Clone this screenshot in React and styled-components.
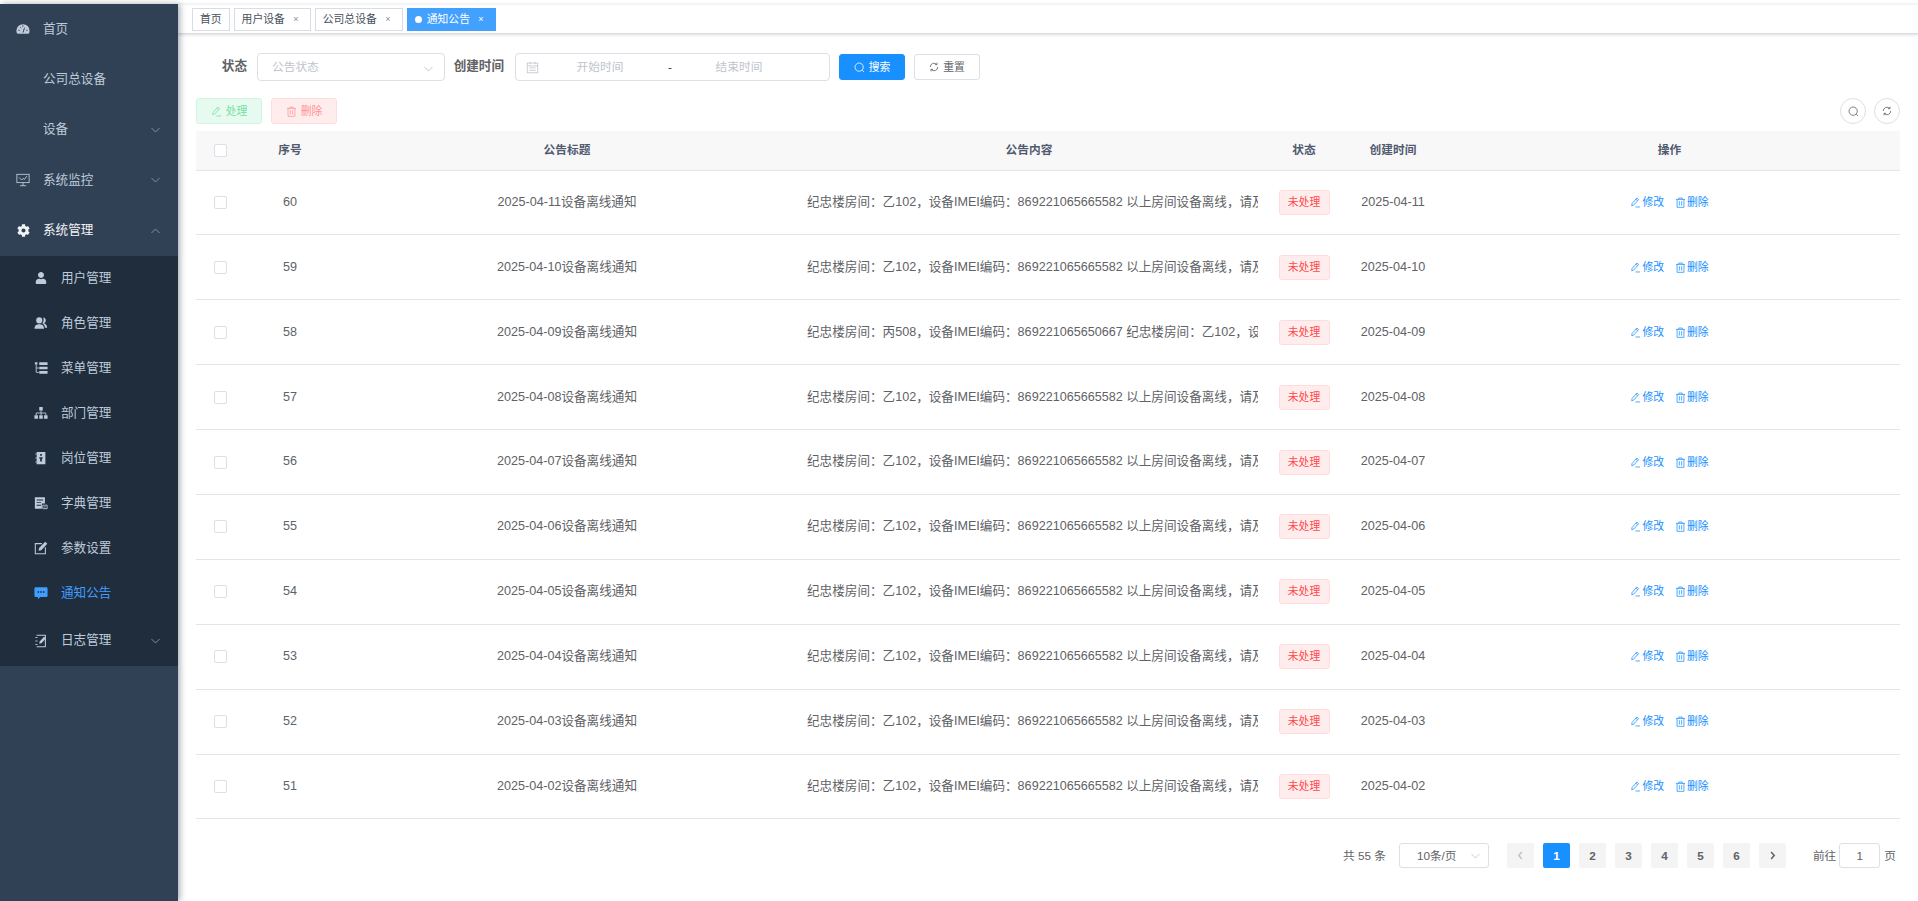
import React from "react";
import styled, { createGlobalStyle } from "styled-components";
import { FaCog, FaUser } from "react-icons/fa";

const GlobalStyle = createGlobalStyle`
  html, body {
    margin: 0;
    padding: 0;
    background: #fff;
    overflow: hidden;
  }
  * {
    box-sizing: border-box;
  }
  body {
    font-family: "Liberation Sans", "Noto Sans CJK SC", sans-serif;
    line-height: 1.2;
  }
`;

const Page = styled.div`
  width: 1918px;
  height: 901px;
  padding-top: 4px;
  display: flex;
  overflow: hidden;
`;

/* sidebar */
const Sidebar = styled.aside`
  width: 178px;
  flex: none;
  background: #304156;
  box-shadow: 2px 0 6px rgba(0, 21, 41, 0.35);
  z-index: 2;
`;

const MenuRow = styled.div`
  height: 50.4px;
  display: flex;
  align-items: center;
  padding-left: 16px;
  font-size: 12.6px;
  color: ${(p) => (p.$active ? "#f4f4f5" : "#bfcbd9")};
  position: relative;
`;

const MenuIcon = styled.span`
  width: 14px;
  height: 14px;
  margin-right: 13px;
  display: flex;
  align-items: center;
  justify-content: center;
  color: ${(p) => p.$color || "#bfcbd9"};
  svg {
    display: block;
  }
`;

const MenuText = styled.span`
  flex: 1;
  padding-left: ${(p) => (p.$plain ? "27px" : "0")};
`;

const Chevron = styled.svg`
  width: 9px;
  height: 6px;
  flex: none;
  margin: ${(p) => p.$margin || "0 18px 0 0"};
  fill: none;
  stroke: ${(p) => p.$color || "#8b98a9"};
  stroke-width: 0.9;
  transform: ${(p) => (p.$up ? "rotate(180deg)" : "none")};
`;

const SubMenu = styled.div`
  background: #1f2d3d;
`;

const SubRow = styled.div`
  height: ${(p) => (p.$tall ? "50px" : "45px")};
  display: flex;
  align-items: center;
  padding-left: 34px;
  font-size: 12.6px;
  color: ${(p) => (p.$active ? "#409eff" : "#bfcbd9")};
`;

/* main */
const Main = styled.main`
  flex: 1;
  min-width: 0;
  display: flex;
  flex-direction: column;
`;

const TagBar = styled.div`
  height: 30px;
  flex: none;
  padding: 3px 0 0 14px;
  display: flex;
  gap: 4px;
  border-top: 1px solid #f1f2f4;
  border-bottom: 1px solid #d8dce5;
  box-shadow: 0 1px 3px rgba(0, 0, 0, 0.12), 0 0 3px rgba(0, 0, 0, 0.04);
  background: #fff;
`;

const Tag = styled.div`
  height: 23px;
  display: flex;
  align-items: center;
  padding: 0 ${(p) => (p.$closable ? "9px" : "7px")} 0 7px;
  font-size: 10.8px;
  border: 1px solid ${(p) => (p.$active ? "#42a0ff" : "#d8dce5")};
  background: ${(p) => (p.$active ? "#42a0ff" : "#fff")};
  color: ${(p) => (p.$active ? "#fff" : "#495060")};
`;

const TagDot = styled.span`
  width: 7px;
  height: 7px;
  border-radius: 50%;
  background: #fff;
  margin-right: 5px;
`;

const TagClose = styled.span`
  font-size: 9px;
  margin-left: 6px;
  width: 10px;
  text-align: center;
  color: ${(p) => (p.$active ? "#fff" : "#8a8f99")};
`;

const Content = styled.div`
  padding: 19px 18px 0;
`;

const SearchForm = styled.form`
  height: 28px;
  display: flex;
  align-items: center;
  margin: 0;
`;

const FormLabel = styled.label`
  width: ${(p) => p.$width}px;
  flex: none;
  text-align: right;
  padding-right: ${(p) => p.$pad}px;
  font-size: 12.6px;
  font-weight: 700;
  color: #606266;
`;

const SelectBox = styled.div`
  width: 188px;
  height: 28px;
  flex: none;
  border: 1px solid #dcdfe6;
  border-radius: 4px;
  display: flex;
  align-items: center;
  justify-content: space-between;
  padding: 0 11px 0 14px;
  font-size: 11.7px;
  color: #c0c4cc;
`;

const RangeBox = styled.div`
  width: 315px;
  height: 28px;
  flex: none;
  border: 1px solid #dcdfe6;
  border-radius: 4px;
  display: grid;
  grid-template-columns: 31px 86px 54px 84px;
  align-items: center;
  padding-left: 10px;
  font-size: 11.7px;
  color: #c0c4cc;
  text-align: center;
  svg {
    display: block;
  }
`;

const RangeDash = styled.span`
  color: #303133;
`;

const Button = styled.button`
  width: 66px;
  height: 26px;
  flex: none;
  margin-left: ${(p) => p.$ml || 0}px;
  border-radius: 3px;
  border: 1px solid ${(p) => p.$border};
  background: ${(p) => p.$bg};
  color: ${(p) => p.$color};
  font: inherit;
  font-size: 10.8px;
  display: flex;
  align-items: center;
  justify-content: center;
  gap: 4px;
  padding: 0;
`;

const Toolbar = styled.div`
  height: 26px;
  margin-top: 17px;
  display: flex;
  align-items: center;
`;

const RoundButtons = styled.div`
  margin-left: auto;
  display: flex;
  gap: 8px;
`;

const RoundButton = styled.div`
  width: 26px;
  height: 26px;
  border: 1px solid #dcdfe6;
  border-radius: 50%;
  display: flex;
  align-items: center;
  justify-content: center;
  color: #606266;
`;

const Table = styled.table`
  width: 1704px;
  margin-top: 7px;
  border-collapse: collapse;
  table-layout: fixed;
`;

const HeadCell = styled.th`
  height: 39px;
  padding: 0 10px;
  background: #f8f8f9;
  border-bottom: 1px solid #dfe6ec;
  font-size: 11.7px;
  font-weight: 700;
  color: #515a6e;
  text-align: center;
`;

const Cell = styled.td`
  height: 64.9px;
  padding: 0 10px;
  border-bottom: 1px solid #dfe6ec;
  font-size: 12.6px;
  color: #606266;
  text-align: center;
`;

const ClipText = styled.div`
  white-space: nowrap;
  overflow: hidden;
  text-align: left;
  margin-right: -7px;
`;

const Check = styled.span`
  display: block;
  width: 13px;
  height: 13px;
  margin-left: 8px;
  border: 1px solid #dcdfe6;
  border-radius: 2px;
  background: #fff;
`;

const StatusTag = styled.span`
  display: inline-flex;
  align-items: center;
  justify-content: center;
  vertical-align: middle;
  width: 51px;
  height: 25px;
  font-size: 10.8px;
  color: #ff4949;
  background: #ffeded;
  border: 1px solid #ffdbdb;
  border-radius: 3px;
`;

const Actions = styled.div`
  display: flex;
  justify-content: center;
  gap: 11px;
`;

const ActionLink = styled.span`
  display: flex;
  align-items: center;
  gap: 1px;
  font-size: 10.8px;
  color: #1890ff;
  svg {
    display: block;
  }
`;

const Pagination = styled.div`
  margin-top: 24px;
  padding-right: 4px;
  height: 25px;
  display: flex;
  align-items: center;
  justify-content: flex-end;
  font-size: 11.7px;
  color: #606266;
`;

const PageSize = styled.div`
  width: 90px;
  height: 25px;
  margin: 0 18px 0 13px;
  border: 1px solid #dcdfe6;
  border-radius: 3px;
  display: flex;
  align-items: center;
  justify-content: space-between;
  padding: 0 8px 0 17px;
`;

const PageBtn = styled.div`
  width: 27px;
  height: 25px;
  margin-right: ${(p) => (p.$last ? "27px" : "9px")};
  border-radius: 2px;
  display: flex;
  align-items: center;
  justify-content: center;
  font-weight: 700;
  background: ${(p) => (p.$active ? "#1890ff" : "#f4f4f5")};
  color: ${(p) => (p.$active ? "#fff" : p.$muted ? "#c0c4cc" : "#606266")};
`;

const JumpInput = styled.div`
  width: 41px;
  height: 25px;
  margin: 0 4px 0 3px;
  border: 1px solid #dcdfe6;
  border-radius: 3px;
  display: flex;
  align-items: center;
  justify-content: center;
`;

/* icons */
const Ico = ({ size = 14, children, ...rest }) => (
  <svg width={size} height={size} viewBox="0 0 16 16" fill="currentColor" {...rest}>
    {children}
  </svg>
);

const GaugeIcon = () => (
  <Ico>
    <path d="M0.5 10a7.5 7.5 0 0 1 15 0c0 2-.6 3.500-1.600 3.500H2.100C1.100 13.500.5 12 .5 10z" />
    <path d="M8 12 9.800 6.500M2.800 9.500h1.500M11.800 9.500h1.500M4.800 6l1 1M7.800 3.800v1.700" stroke="#304156" strokeWidth="1.100" fill="none" />
  </Ico>
);

const MonitorIcon = () => (
  <Ico>
    <g fill="none" stroke="currentColor" strokeWidth="1">
      <rect x="1" y="1.500" width="14" height="9.500" />
      <path d="M8 11v3.500M4.500 14.500h7M3.500 5l3 3 2-2 1 1.500 3-4" />
    </g>
  </Ico>
);

const PeoplesIcon = () => (
  <Ico>
    <circle cx="6" cy="5" r="3.500" />
    <path d="M0.500 14.500c0-3.500 2-5 5.500-5s5.500 1.500 5.500 5z" />
    <path d="M10.500 1.800c1.900.2 3 1.500 3 3.200s-1 2.900-2.600 3.200c2.500.5 4.100 2.300 4.100 5.300h-2.500c0-2-1-4-3-5 1.500-1.500 2-4.500 1-6.700z" />
  </Ico>
);

const TreeTableIcon = () => (
  <Ico>
    <path d="M1 1.500h3v2.500H1zM6 1.500h9.500v3H6zM6 6.500h9.500v3H6zM6 11.500h9.500v3H6z" />
    <path d="M2.500 4v9h3M2.500 8h3" fill="none" stroke="currentColor" strokeWidth="1" />
  </Ico>
);

const TreeIcon = () => (
  <Ico>
    <path d="M6 1h4v4H6zM0.500 10.500h4v4h-4zM6 10.500h4v4H6zM11.500 10.500h4v4h-4z" />
    <path d="M8 5v5.500M2.500 10.500V8h11v2.500" fill="none" stroke="currentColor" strokeWidth="1" />
  </Ico>
);

const PostIcon = () => (
  <Ico>
    <path fillRule="evenodd" d="M3 1h10v14H3zM7 3.500v2h2v-2zM6 7v1.500h1v3l1 1 1-1v-3h1V7z" />
    <path d="M1.500 3.500H3M1.500 8H3M1.500 12.500H3" stroke="currentColor" fill="none" />
  </Ico>
);

const DictIcon = () => (
  <Ico>
    <path fillRule="evenodd" d="M1 1.500h11.500v7H9v6H1zM3 4v1h7.500V4zM3 7v1h5V7zM3 10v1h5v-1z" />
    <path d="M10 10.500h5v4h-5z" fill="none" stroke="currentColor" />
    <circle cx="12.500" cy="12.500" r="0.800" />
  </Ico>
);

const EditBoxIcon = () => (
  <Ico>
    <path d="M9 3H1.500v11.500H13V7" fill="none" stroke="currentColor" strokeWidth="1.200" />
    <path d="M12.800.800l2.400 2.400-7 7.300-3 .7.600-3.100z" />
  </Ico>
);

const MessageIcon = () => (
  <Ico>
    <path fillRule="evenodd" d="M2 1.500h12a1.500 1.500 0 0 1 1.500 1.500v8a1.500 1.500 0 0 1-1.500 1.500H7L4.500 15v-2.500H2A1.500 1.500 0 0 1 .5 11V3A1.500 1.500 0 0 1 2 1.500zM4 6v1.800h1.800V6zM7.100 6v1.800h1.800V6zM10.200 6v1.800H12V6z" />
  </Ico>
);

const LogIcon = () => (
  <Ico>
    <path d="M3 1.500h10v13H3" fill="none" stroke="currentColor" strokeWidth="1.200" />
    <path d="M1.500 4H4M1.500 8H4M1.500 12H4" stroke="currentColor" fill="none" />
    <path d="M11.500 3l2 2-5 5.500-2.500.6.500-2.600z" />
  </Ico>
);

const ChevronDown = (props) => (
  <Chevron viewBox="0 0 9 6" {...props}>
    <path d="M0.500 1 4.500 5 8.500 1" />
  </Chevron>
);

const PageArrow = ({ flip }) => (
  <Ico size={11} transform={flip ? "scale(-1 1)" : undefined}>
    <path d="M10 3 5.500 8 10 13" fill="none" stroke="currentColor" strokeWidth="2.200" />
  </Ico>
);

const PencilIcon = ({ size = 11 }) => (
  <Ico size={size}>
    <g fill="none" stroke="currentColor" strokeWidth="1.100">
      <path d="M10 1.500l2.500 2.200-7 8-3 1 .5-3.200zM8.500 3l2.500 2.300M8 14.500h6.500" />
    </g>
  </Ico>
);

const TrashIcon = ({ size = 11 }) => (
  <Ico size={size}>
    <g fill="none" stroke="currentColor" strokeWidth="1.100">
      <path d="M1.500 3.500h13M5.500 3.500V1.500h5v2M3 3.500v11.500h10V3.500M6.300 6v6.500M9.700 6v6.500" />
    </g>
  </Ico>
);

const SearchIcon = ({ size = 11 }) => (
  <Ico size={size}>
    <g fill="none" stroke="currentColor" strokeWidth="1.200">
      <circle cx="7.500" cy="7.500" r="6" />
      <path d="M12 12l2.500 2.500" />
    </g>
  </Ico>
);

const RefreshIcon = ({ size = 10 }) => (
  <Ico size={size}>
    <g fill="none" stroke="currentColor" strokeWidth="1.300">
      <path d="M2 8a6 6 0 0 1 10.500-4M14 8a6 6 0 0 1-10.500 4" />
      <path d="M12.800 1v3.300H9.500M3.200 15v-3.300h3.300" />
    </g>
  </Ico>
);

const DateIcon = () => (
  <Ico size={13}>
    <g fill="none" stroke="#c0c4cc" strokeWidth="1">
      <rect x="1.500" y="2.500" width="13" height="12" />
      <path d="M1.500 6h13M5 1v3M11 1v3M4 8.500h8M4 11.500h8" />
    </g>
  </Ico>
);

const menuTop = [
  { text: "首页", icon: <GaugeIcon /> },
  { text: "公司总设备", plain: true },
  { text: "设备", plain: true, arrow: true },
  { text: "系统监控", icon: <MonitorIcon />, arrow: true },
];

const subMenu = [
  { text: "用户管理", icon: <FaUser size={12} /> },
  { text: "角色管理", icon: <PeoplesIcon /> },
  { text: "菜单管理", icon: <TreeTableIcon /> },
  { text: "部门管理", icon: <TreeIcon /> },
  { text: "岗位管理", icon: <PostIcon /> },
  { text: "字典管理", icon: <DictIcon /> },
  { text: "参数设置", icon: <EditBoxIcon /> },
  { text: "通知公告", icon: <MessageIcon />, active: true },
];

const offline = "869221065665582 以上房间设备离线，请及时处理";
const rows = [
  [60, "2025-04-11", `纪忠楼房间：乙102，设备IMEI编码：${offline}`],
  [59, "2025-04-10", `纪忠楼房间：乙102，设备IMEI编码：${offline}`],
  [58, "2025-04-09", "纪忠楼房间：丙508，设备IMEI编码：869221065650667 纪忠楼房间：乙102，设备IMEI编码：869221065665582"],
  [57, "2025-04-08", `纪忠楼房间：乙102，设备IMEI编码：${offline}`],
  [56, "2025-04-07", `纪忠楼房间：乙102，设备IMEI编码：${offline}`],
  [55, "2025-04-06", `纪忠楼房间：乙102，设备IMEI编码：${offline}`],
  [54, "2025-04-05", `纪忠楼房间：乙102，设备IMEI编码：${offline}`],
  [53, "2025-04-04", `纪忠楼房间：乙102，设备IMEI编码：${offline}`],
  [52, "2025-04-03", `纪忠楼房间：乙102，设备IMEI编码：${offline}`],
  [51, "2025-04-02", `纪忠楼房间：乙102，设备IMEI编码：${offline}`],
];

const columns = [47, 94, 460, 464, 86, 92, 461];

const App = () => {
  return (
    <Page>
      <GlobalStyle />
      <Sidebar>
        {menuTop.map((m) => (
          <MenuRow key={m.text}>
            {m.icon && <MenuIcon>{m.icon}</MenuIcon>}
            <MenuText $plain={m.plain}>{m.text}</MenuText>
            {m.arrow && <ChevronDown />}
          </MenuRow>
        ))}
        <MenuRow $active>
          <MenuIcon $color="#f4f4f5">
            <FaCog size={13} />
          </MenuIcon>
          <MenuText>系统管理</MenuText>
          <ChevronDown $up />
        </MenuRow>
        <SubMenu>
          {subMenu.map((m) => (
            <SubRow key={m.text} $active={m.active}>
              <MenuIcon $color={m.active ? "#409eff" : "#bfcbd9"}>{m.icon}</MenuIcon>
              <MenuText>{m.text}</MenuText>
            </SubRow>
          ))}
          <SubRow $tall>
            <MenuIcon>
              <LogIcon />
            </MenuIcon>
            <MenuText>日志管理</MenuText>
            <ChevronDown />
          </SubRow>
        </SubMenu>
      </Sidebar>

      <Main>
        <TagBar>
          <Tag>首页</Tag>
          <Tag $closable>
            用户设备<TagClose>×</TagClose>
          </Tag>
          <Tag $closable>
            公司总设备<TagClose>×</TagClose>
          </Tag>
          <Tag $closable $active>
            <TagDot />
            通知公告<TagClose $active>×</TagClose>
          </Tag>
        </TagBar>

        <Content>
          <SearchForm>
            <FormLabel $width={61} $pad={10}>
              状态
            </FormLabel>
            <SelectBox>
              公告状态
              <ChevronDown $color="#c0c4cc" $margin="4px 0 0 0" />
            </SelectBox>
            <FormLabel $width={70} $pad={11}>
              创建时间
            </FormLabel>
            <RangeBox>
              <DateIcon />
              <span>开始时间</span>
              <RangeDash>-</RangeDash>
              <span>结束时间</span>
            </RangeBox>
            <Button $ml={9} $bg="#1890ff" $border="#1890ff" $color="#fff">
              <SearchIcon />
              搜索
            </Button>
            <Button $ml={9} $bg="#fff" $border="#dcdfe6" $color="#606266">
              <RefreshIcon />
              重置
            </Button>
          </SearchForm>

          <Toolbar>
            <Button $bg="#e7faf0" $border="#d0f5e0" $color="#71e2a3">
              <PencilIcon />
              处理
            </Button>
            <Button $ml={9} $bg="#ffeded" $border="#ffdbdb" $color="#ff9292">
              <TrashIcon />
              删除
            </Button>
            <RoundButtons>
              <RoundButton>
                <SearchIcon />
              </RoundButton>
              <RoundButton>
                <RefreshIcon />
              </RoundButton>
            </RoundButtons>
          </Toolbar>

          <Table>
            <colgroup>
              {columns.map((w, i) => (
                <col key={i} width={w} />
              ))}
            </colgroup>
            <thead>
              <tr>
                <HeadCell>
                  <Check />
                </HeadCell>
                <HeadCell>序号</HeadCell>
                <HeadCell>公告标题</HeadCell>
                <HeadCell>公告内容</HeadCell>
                <HeadCell>状态</HeadCell>
                <HeadCell>创建时间</HeadCell>
                <HeadCell>操作</HeadCell>
              </tr>
            </thead>
            <tbody>
              {rows.map(([id, date, text]) => (
                <tr key={id}>
                  <Cell>
                    <Check />
                  </Cell>
                  <Cell>{id}</Cell>
                  <Cell>{date}设备离线通知</Cell>
                  <Cell>
                    <ClipText>{text}</ClipText>
                  </Cell>
                  <Cell>
                    <StatusTag>未处理</StatusTag>
                  </Cell>
                  <Cell>{date}</Cell>
                  <Cell>
                    <Actions>
                      <ActionLink>
                        <PencilIcon />
                        修改
                      </ActionLink>
                      <ActionLink>
                        <TrashIcon />
                        删除
                      </ActionLink>
                    </Actions>
                  </Cell>
                </tr>
              ))}
            </tbody>
          </Table>

          <Pagination>
            <span>共 55 条</span>
            <PageSize>
              10条/页
              <ChevronDown $color="#c0c4cc" $margin="0" />
            </PageSize>
            <PageBtn $muted>
              <PageArrow />
            </PageBtn>
            <PageBtn $active>1</PageBtn>
            {[2, 3, 4, 5, 6].map((n) => (
              <PageBtn key={n}>{n}</PageBtn>
            ))}
            <PageBtn $last>
              <PageArrow flip />
            </PageBtn>
            <span>前往</span>
            <JumpInput>1</JumpInput>
            <span>页</span>
          </Pagination>
        </Content>
      </Main>
    </Page>
  );
};

export default App;
